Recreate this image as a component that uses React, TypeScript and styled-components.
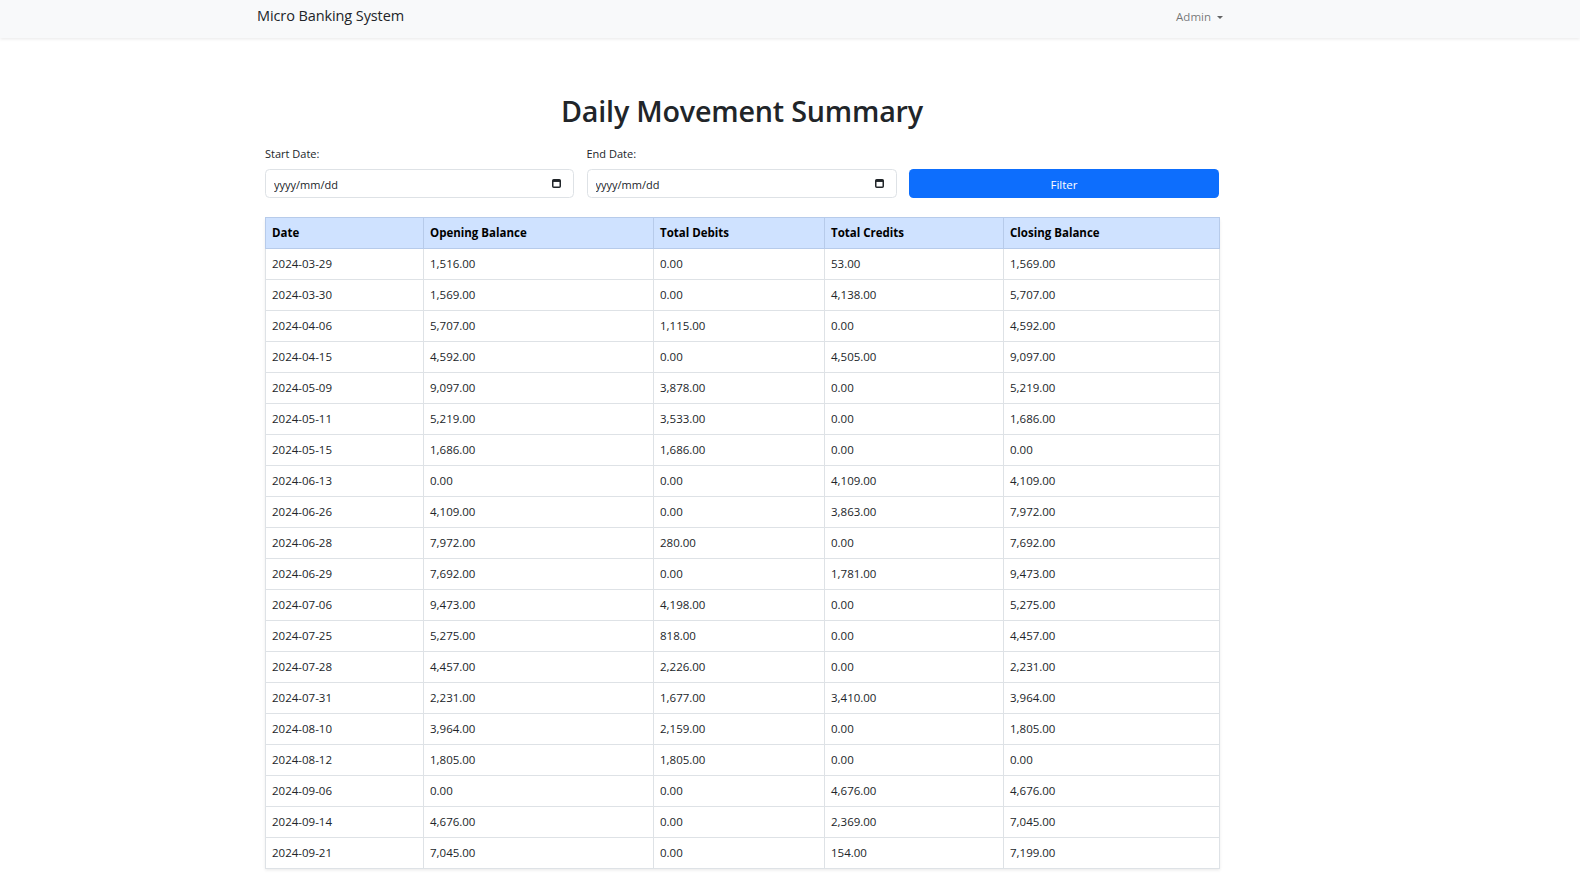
import React from "react";
import styled, { createGlobalStyle } from "styled-components";

const Global = createGlobalStyle`
  * { box-sizing: border-box; }
  html, body { margin: 0; padding: 0; background: #fff; }
  body {
    font-family: "Open Sans", "Noto Sans", "Liberation Sans", sans-serif;
    color: #212529;
    font-size: 12px;
    line-height: 1.5;
  }
`;

const NavBar = styled.nav`
  background: #f8f9fa;
  height: 38px;
  box-shadow: 0 1.5px 3px rgba(0, 0, 0, 0.075);
  display: flex;
  align-items: center;
  padding-bottom: 5px;
`;

const NavInner = styled.div`
  width: 966px;
  margin-left: 257px;
  display: flex;
  align-items: center;
  justify-content: space-between;
`;

const Brand = styled.a`
  font-size: 14.5px;
  color: #212529;
  text-decoration: none;
  line-height: 1;
  letter-spacing: -0.1px;
`;

const UserMenu = styled.button`
  border: none;
  background: none;
  padding: 0;
  font-family: inherit;
  font-size: 11.5px;
  color: rgba(0, 0, 0, 0.55);
  display: flex;
  align-items: center;
  gap: 6px;
  cursor: pointer;
`;

const Caret = styled.span`
  width: 0;
  height: 0;
  border-left: 3.5px solid transparent;
  border-right: 3.5px solid transparent;
  border-top: 3.5px solid rgba(0, 0, 0, 0.6);
  margin-top: 1px;
`;

const Main = styled.main`
  width: 954px;
  margin-left: 265px;
  padding-top: 55px;
  padding-bottom: 20px;
`;

const Title = styled.h1`
  margin: 0 0 16px;
  font-size: 28.7px;
  font-weight: 600;
  line-height: 36px;
  text-align: center;
  color: #212529;
  letter-spacing: -0.2px;
`;

const FilterRow = styled.form`
  display: grid;
  grid-template-columns: 309px 310px 310px;
  column-gap: 12.5px;
  align-items: end;
  margin-bottom: 19px;
`;

const Field = styled.div`
  display: flex;
  flex-direction: column;
`;

const Label = styled.label`
  font-size: 11px;
  line-height: 18px;
  margin-bottom: 6px;
  color: #212529;
`;

const InputWrap = styled.div`
  position: relative;
  height: 29px;
`;

const DateInput = styled.input`
  width: 100%;
  height: 29px;
  border: 1px solid #dee2e6;
  border-radius: 4.5px;
  padding: 2px 8px 0;
  font-family: inherit;
  font-size: 11px;
  color: #212529;
  background: #fff;
  outline: none;
  &::placeholder { color: #212529; opacity: 1; }
`;

const CalIcon = styled.svg`
  position: absolute;
  right: 13px;
  top: 9px;
  pointer-events: none;
`;

const FilterButton = styled.button`
  height: 29px;
  border: none;
  border-radius: 4.5px;
  background: #0d6efd;
  color: #fff;
  font-family: inherit;
  font-size: 11.5px;
  padding-top: 2px;
  cursor: pointer;
`;

const Table = styled.table`
  width: 954px;
  border-collapse: collapse;
  table-layout: fixed;
  box-shadow: 0 1.5px 3px rgba(0, 0, 0, 0.075);
  font-size: 11.5px;
`;

const HeadCell = styled.th`
  background: #cfe2ff;
  border: 1px solid #b7cbea;
  text-align: left;
  font-weight: 700;
  padding: 0 6px;
  height: 31px;
  color: #000;
`;

const Cell = styled.td`
  border: 1px solid #dee2e6;
  padding: 0 6px;
  height: 31px;
  color: #212529;
`;

const rows: string[][] = [
  ["2024-03-29", "1,516.00", "0.00", "53.00", "1,569.00"],
  ["2024-03-30", "1,569.00", "0.00", "4,138.00", "5,707.00"],
  ["2024-04-06", "5,707.00", "1,115.00", "0.00", "4,592.00"],
  ["2024-04-15", "4,592.00", "0.00", "4,505.00", "9,097.00"],
  ["2024-05-09", "9,097.00", "3,878.00", "0.00", "5,219.00"],
  ["2024-05-11", "5,219.00", "3,533.00", "0.00", "1,686.00"],
  ["2024-05-15", "1,686.00", "1,686.00", "0.00", "0.00"],
  ["2024-06-13", "0.00", "0.00", "4,109.00", "4,109.00"],
  ["2024-06-26", "4,109.00", "0.00", "3,863.00", "7,972.00"],
  ["2024-06-28", "7,972.00", "280.00", "0.00", "7,692.00"],
  ["2024-06-29", "7,692.00", "0.00", "1,781.00", "9,473.00"],
  ["2024-07-06", "9,473.00", "4,198.00", "0.00", "5,275.00"],
  ["2024-07-25", "5,275.00", "818.00", "0.00", "4,457.00"],
  ["2024-07-28", "4,457.00", "2,226.00", "0.00", "2,231.00"],
  ["2024-07-31", "2,231.00", "1,677.00", "3,410.00", "3,964.00"],
  ["2024-08-10", "3,964.00", "2,159.00", "0.00", "1,805.00"],
  ["2024-08-12", "1,805.00", "1,805.00", "0.00", "0.00"],
  ["2024-09-06", "0.00", "0.00", "4,676.00", "4,676.00"],
  ["2024-09-14", "4,676.00", "0.00", "2,369.00", "7,045.00"],
  ["2024-09-21", "7,045.00", "0.00", "154.00", "7,199.00"],
];

const headers = ["Date", "Opening Balance", "Total Debits", "Total Credits", "Closing Balance"];
const widths = [158, 230, 171, 179, 216];

const Calendar = () => (
  <CalIcon width="9" height="10" viewBox="0 0 9 10">
    <rect x="0.75" y="1.75" width="7.5" height="7.5" rx="1" fill="none" stroke="#212529" strokeWidth="1.5" />
    <rect x="0.75" y="1.75" width="7.5" height="2.2" fill="#212529" />
  </CalIcon>
);

export default function App() {
  return (
    <>
      <Global />
      <NavBar>
        <NavInner>
          <Brand href="#">Micro Banking System</Brand>
          <UserMenu type="button">
            Admin <Caret />
          </UserMenu>
        </NavInner>
      </NavBar>
      <Main>
        <Title>Daily Movement Summary</Title>
        <FilterRow onSubmit={(e) => e.preventDefault()}>
          <Field>
            <Label>Start Date:</Label>
            <InputWrap>
              <DateInput type="text" placeholder="yyyy/mm/dd" readOnly />
              <Calendar />
            </InputWrap>
          </Field>
          <Field>
            <Label>End Date:</Label>
            <InputWrap>
              <DateInput type="text" placeholder="yyyy/mm/dd" readOnly />
              <Calendar />
            </InputWrap>
          </Field>
          <FilterButton type="submit">Filter</FilterButton>
        </FilterRow>
        <Table>
          <colgroup>
            {widths.map((w, i) => (
              <col key={i} style={{ width: w }} />
            ))}
          </colgroup>
          <thead>
            <tr>
              {headers.map((h) => (
                <HeadCell key={h}>{h}</HeadCell>
              ))}
            </tr>
          </thead>
          <tbody>
            {rows.map((r) => (
              <tr key={r[0]}>
                {r.map((c, i) => (
                  <Cell key={i}>{c}</Cell>
                ))}
              </tr>
            ))}
          </tbody>
        </Table>
      </Main>
    </>
  );
}
